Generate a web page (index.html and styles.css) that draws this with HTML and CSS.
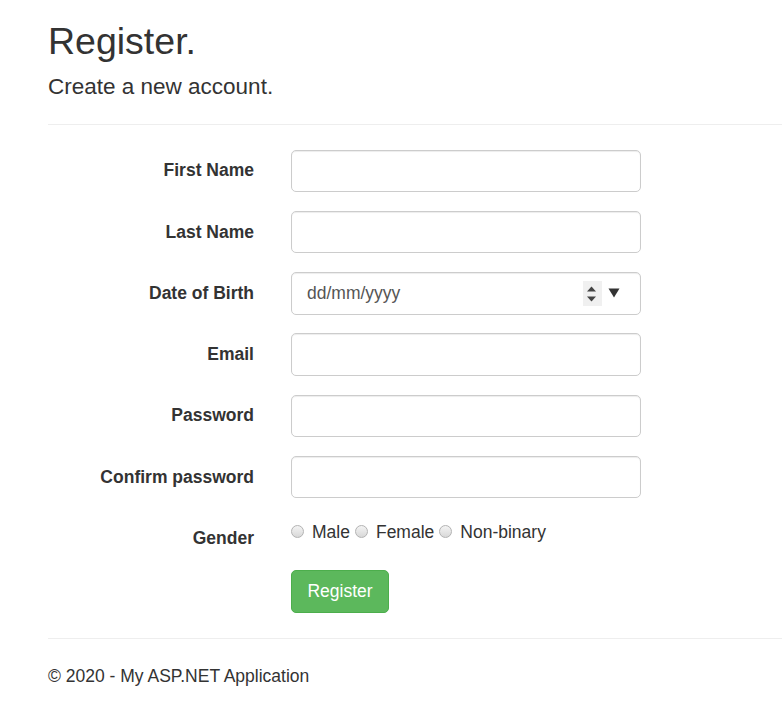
FILE: index.html
```html
<!DOCTYPE html>
<html lang="en">
<head>
<meta charset="utf-8">
<title>Register</title>
<link rel="stylesheet" href="styles.css">
</head>
<body>
<main class="body-content">
  <h2 class="page-title">Register.</h2>
  <h4 class="page-subtitle">Create a new account.</h4>
  <hr class="rule rule-top">
  <form class="form-horizontal">
    <div class="form-group">
      <label class="control-label" for="fn">First Name</label>
      <div class="field"><input class="form-control" id="fn" type="text"></div>
    </div>
    <div class="form-group">
      <label class="control-label" for="ln">Last Name</label>
      <div class="field"><input class="form-control" id="ln" type="text"></div>
    </div>
    <div class="form-group">
      <label class="control-label">Date of Birth</label>
      <div class="field">
        <div class="form-control date-control">
          <span class="date-text">dd/mm/yyyy</span>
          <svg class="spin" width="19" height="25" viewBox="0 0 19 25"><rect width="19" height="25" fill="#f0f0f0"/><path d="M4 10.5 L8.5 5.5 L13 10.5 Z" fill="#444"/><path d="M4 15.5 L13 15.5 L8.5 20.5 Z" fill="#444"/></svg>
          <svg class="drop" width="12" height="10" viewBox="0 0 12 10"><path d="M0.5 0.5 L11.5 0.5 L6 9.5 Z" fill="#333"/></svg>
        </div>
      </div>
    </div>
    <div class="form-group">
      <label class="control-label" for="em">Email</label>
      <div class="field"><input class="form-control" id="em" type="text"></div>
    </div>
    <div class="form-group">
      <label class="control-label" for="pw">Password</label>
      <div class="field"><input class="form-control" id="pw" type="password"></div>
    </div>
    <div class="form-group">
      <label class="control-label" for="cpw">Confirm password</label>
      <div class="field"><input class="form-control" id="cpw" type="password"></div>
    </div>
    <div class="form-group">
      <label class="control-label">Gender</label>
      <div class="field radios">
        <input class="radio" type="radio" name="g" id="gm"><label for="gm">Male</label>
        <input class="radio" type="radio" name="g" id="gf"><label for="gf">Female</label>
        <input class="radio" type="radio" name="g" id="gn"><label for="gn">Non-binary</label>
      </div>
    </div>
    <div class="form-group">
      <div class="spacer"></div>
      <div class="field"><button type="button" class="btn-success">Register</button></div>
    </div>
  </form>
  <hr class="rule">
  <footer class="footer">
    <p>© 2020 - My ASP.NET Application</p>
  </footer>
</main>
</body>
</html>
```
FILE: styles.css
```css
html, body {
  margin: 0;
  padding: 0;
  background: #fff;
}
body {
  font-family: "Liberation Sans", Arial, Helvetica, sans-serif;
  font-size: 17.5px;
  line-height: 25px;
  color: #333;
}
.body-content {
  padding-left: 48px;
  display: flow-root;
}
.page-title {
  font-size: 37.5px;
  font-weight: 400;
  line-height: 1.1;
  margin: 21px 0 12.5px;
}
.page-subtitle {
  font-size: 22.5px;
  font-weight: 400;
  line-height: 1.1;
  margin: 12px 0 12px;
}
.rule {
  border: 0;
  border-top: 1px solid #eee;
  margin: 25px 0;
  height: 0;
}
.rule-top {
  margin-top: 24px;
}
.form-horizontal {
  margin: 0;
}
.form-group {
  display: grid;
  grid-template-columns: 206px 350px;
  column-gap: 37px;
  margin-bottom: 18.75px;
  align-items: start;
}
.control-label {
  text-align: right;
  font-weight: 700;
  padding-top: 8.75px;
  line-height: 25px;
}
.form-control {
  display: block;
  box-sizing: border-box;
  width: 350px;
  height: 42.5px;
  padding: 7.5px 15px;
  font-family: inherit;
  font-size: 17.5px;
  line-height: 25px;
  color: #555;
  background: #fff;
  border: 1px solid #ccc;
  border-radius: 5px;
  box-shadow: inset 0 1px 1px rgba(0,0,0,.075);
  margin: 0;
}
.date-control {
  display: flex;
  align-items: center;
  padding-right: 20px;
}
.date-text {
  flex: 1;
  color: #555;
}
.spin {
  display: block;
  margin-right: 6px;
}
.drop {
  display: block;
}
.radios {
  line-height: 25px;
  display: flex;
  align-items: center;
  height: 25px;
  padding-top: 3px;
}
.radios label {
  font-weight: 400;
  color: #333;
}
.radio {
  appearance: none;
  -webkit-appearance: none;
  width: 13px;
  height: 13px;
  box-sizing: border-box;
  border-radius: 50%;
  border: 1px solid #b3b3b3;
  background: linear-gradient(#f4f4f4, #d8d8d8);
  margin: 0 8px 2px 0;
  padding: 0;
}
.radio + label + .radio {
  margin-left: 5px;
}
.btn-success {
  font-family: inherit;
  font-size: 17.5px;
  line-height: 25px;
  height: 43px;
  width: 98px;
  padding: 7.5px 15px;
  color: #fff;
  background: #5cb85c;
  border: 1px solid #4cae4c;
  border-radius: 5px;
  cursor: pointer;
  margin: 0;
}
.footer p {
  margin: 0 0 12.5px;
}
```
